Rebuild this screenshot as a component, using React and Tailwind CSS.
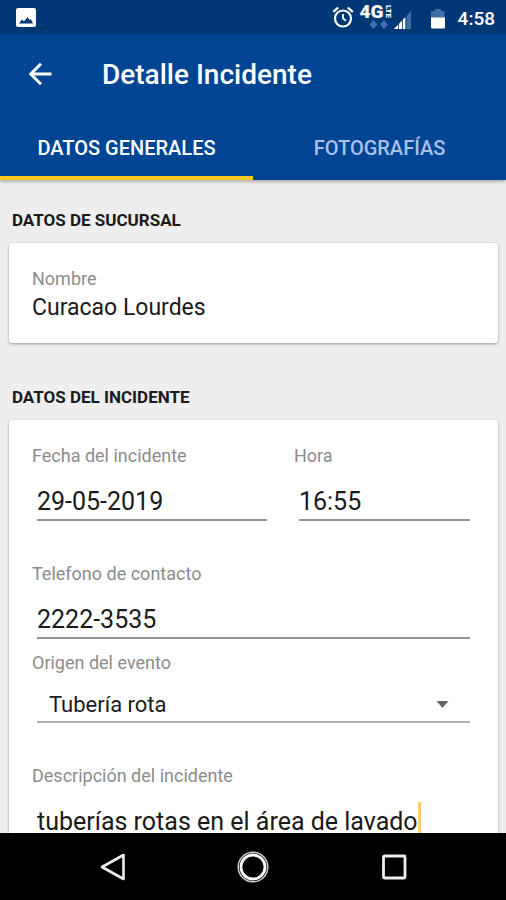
import React from "react";

const labelClass = "block text-[18px] leading-[22px] text-[#8c8c8c]";
const inputClass =
  "block w-full min-w-0 h-10 border-b-2 border-[#959595] bg-transparent pt-0.5 text-[25px] leading-8 text-[#1a1a1a] outline-none";

function StatusBar() {
  return (
    <div className="flex h-[34px] items-center justify-between bg-[#003876] pl-4 pr-[11px] text-white">
      <svg className="size-5" viewBox="0 0 20 20" aria-hidden="true">
        <rect x="0" y="1" width="20" height="19" rx="2" fill="#fff" />
        <path d="M3 16.500 6 12.500l2 2 3.500-4.500 2 3 1.200-1 2.300 4.500z" fill="#003876" />
      </svg>
      <div className="flex items-center">
        <svg className="size-[22px]" viewBox="0 0 22 22" fill="none" stroke="#fff" strokeWidth="2.200" aria-hidden="true">
          <circle cx="11" cy="12.500" r="8" />
          <path d="M11 8v4.500l3 2.200" strokeWidth="1.800" />
          <path d="M1.800 5.400 5.600 2.200M20.200 5.400l-3.800-3.200" strokeLinecap="round" />
        </svg>
        <div className="ml-1.5 flex h-[26px] w-[34px] flex-col">
          <div className="flex h-4 items-center">
            <span className="text-[19px] leading-4 font-black">4G</span>
            <span className="text-[8px] leading-[8px] font-black [writing-mode:vertical-rl]">LTE</span>
          </div>
          <svg className="ml-[9px] h-[9px] w-5" viewBox="0 0 20 9" fill="#3f6fae" aria-hidden="true">
            <path d="M4.500 0 8.500 4.500 4.500 9 .5 4.500zM15 0l4 4.500L15 9l-4-4.500z" />
          </svg>
        </div>
        <svg className="mt-1.5 h-[18px] w-[18px]" viewBox="0 0 18 18" aria-hidden="true">
          <path d="M17 0v18H0z" fill="#3f6fa3" />
          <path d="M11.500 6V18H0z" fill="#fff" />
          <path d="M4.500 11v7M8.500 7v11M12 4v14" stroke="#003876" strokeWidth=".8" />
        </svg>
        <svg className="mt-1 ml-[18px] h-5 w-4" viewBox="0 0 16 20" aria-hidden="true">
          <path d="M5 0h6v2h3.500v7H1V2h4z" fill="#3f6fa3" />
          <path d="M1 8.500h14v10q0 1-1 1H2q-1 0-1-1z" fill="#fff" />
        </svg>
        <span className="ml-3 pt-1 text-[19px] leading-6 font-medium">4:58</span>
      </div>
    </div>
  );
}

function Header() {
  return (
    <header className="relative z-10 shrink-0 bg-[#004593] text-white shadow-[0_1px_4px_rgba(0,0,0,0.4)]">
      <StatusBar />
      <div className="flex h-[79px] items-center pl-7">
        <button type="button" aria-label="Volver" className="flex size-6 items-center justify-center">
          <svg className="size-6" viewBox="0 0 24 24" fill="none" stroke="#fff" strokeWidth="3" aria-hidden="true">
            <path d="M23.500 12H3M13 1.800 2.800 12 13 22.200" />
          </svg>
        </button>
        <h1 className="ml-[50px] pt-0.5 text-[28px] leading-8 font-medium">Detalle Incidente</h1>
      </div>
      <div role="tablist" className="grid h-[67px] grid-cols-2 text-[20px] leading-6 font-medium">
        <button type="button" role="tab" aria-selected="true" className="border-b-4 border-[#f6cb1c] pt-1.5">
          DATOS GENERALES
        </button>
        <button type="button" role="tab" aria-selected="false" className="border-b-4 border-transparent pt-1.5 text-[#a9c1e8]">
          FOTOGRAFÍAS
        </button>
      </div>
    </header>
  );
}

function Section({ title, children }) {
  return (
    <section>
      <h2 className="mb-[11px] pl-[3px] text-[17px] leading-6 font-bold text-[#1a1a1a]">{title}</h2>
      <div className="rounded-[3px] bg-white px-[23px] pt-[25px] pb-[19px] shadow-[0_1px_3px_rgba(0,0,0,0.35)]">
        {children}
      </div>
    </section>
  );
}

function Field({ id, label, value, inputMode }) {
  return (
    <div>
      <label htmlFor={id} className={labelClass}>{label}</label>
      <div className="mt-3.5 px-[5px]">
        <input id={id} type="text" inputMode={inputMode} defaultValue={value} className={inputClass} />
      </div>
    </div>
  );
}

function NavBar() {
  return (
    <nav className="grid h-[67px] shrink-0 grid-cols-[1fr_56px_1fr] items-center bg-black">
      <button type="button" aria-label="Atrás" className="justify-self-center">
        <svg className="size-7" viewBox="0 0 28 28" fill="none" stroke="#eee" strokeWidth="2.600" strokeLinejoin="round" aria-hidden="true">
          <path d="M24.500 2v24L3 14z" />
        </svg>
      </button>
      <button type="button" aria-label="Inicio" className="justify-self-center">
        <svg className="size-8" viewBox="0 0 32 32" fill="none" aria-hidden="true">
          <circle cx="16" cy="16" r="14.800" stroke="#ccc" strokeWidth="1.500" />
          <circle cx="16" cy="16" r="12" stroke="#fff" strokeWidth="2.800" />
        </svg>
      </button>
      <button type="button" aria-label="Recientes" className="justify-self-center">
        <svg className="size-7" viewBox="0 0 28 28" fill="none" stroke="#eee" strokeWidth="2.800" aria-hidden="true">
          <rect x="3.500" y="3" width="21.500" height="22" rx="1" />
        </svg>
      </button>
    </nav>
  );
}

export default function App() {
  return (
    <div className="flex h-screen flex-col bg-[#eeeeee] font-[Roboto,sans-serif]">
      <Header />
      <main className="flex min-h-0 flex-1 flex-col gap-[42px] overflow-y-auto pt-7 pr-2 pl-[9px] [scrollbar-width:none]">
        <Section title="DATOS DE SUCURSAL">
          <p className={labelClass}>Nombre</p>
          <p className="pt-0.5 text-[23px] leading-8 text-[#1a1a1a]">Curacao Lourdes</p>
        </Section>

        <Section title="DATOS DEL INCIDENTE">
          <form>
            <div className="grid grid-cols-[57fr_43fr] gap-[22px]">
              <Field id="fecha" label="Fecha del incidente" value="29-05-2019" />
              <Field id="hora" label="Hora" value="16:55" />
            </div>
            <div className="mt-[42px]">
              <Field id="telefono" label="Telefono de contacto" value="2222-3535" inputMode="tel" />
            </div>

            <label htmlFor="origen" className={labelClass + " mt-[13px]"}>Origen del evento</label>
            <div className="mt-2 px-[5px]">
              <div className="grid items-center">
                <select
                  id="origen"
                  defaultValue="rota"
                  className="col-start-1 row-start-1 h-[41px] w-full appearance-none border-b-2 border-[#b0b0b0] bg-transparent px-3 pt-1.5 text-[22px] leading-8 text-[#1a1a1a] outline-none"
                >
                  <option value="rota">Tubería rota</option>
                </select>
                <svg className="pointer-events-none col-start-1 row-start-1 mt-1 mr-[21px] h-[7px] w-[13px] justify-self-end" viewBox="0 0 12 7" aria-hidden="true">
                  <path d="M0 0h12L6 7z" fill="#666" />
                </svg>
              </div>
            </div>

            <label htmlFor="descripcion" className={labelClass + " mt-[42px]"}>Descripción del incidente</label>
            <div className="mt-3.5 px-[5px]">
              <div className="flex h-10 items-center border-b-2 border-[#f6cb1c]">
                <input
                  id="descripcion"
                  type="text"
                  defaultValue="tuberías rotas en el área de lavado"
                  className="h-10 max-w-full bg-transparent pt-0.5 text-[25px] leading-8 text-[#1a1a1a] outline-none [field-sizing:content]"
                />
                <span className="h-9 w-[3px] shrink-0 bg-[#fccf68]" />
              </div>
            </div>
          </form>
        </Section>
      </main>
      <NavBar />
    </div>
  );
}
